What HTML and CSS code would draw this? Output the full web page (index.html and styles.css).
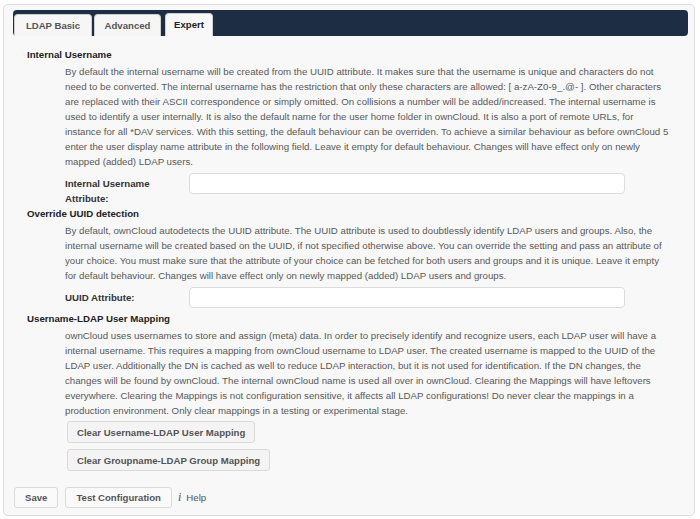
FILE: index.html
```html
<!DOCTYPE html>
<html>
<head>
<meta charset="utf-8">
<link rel="stylesheet" href="styles.css">
</head>
<body>
<div class="box">
  <div class="nav">
    <div class="tab tab-basic">LDAP Basic</div>
    <div class="tab tab-adv">Advanced</div>
    <div class="tab tab-active">Expert</div>
  </div>
  <div class="content">
    <h3 class="title first">Internal Username</h3>
    <p class="desc">By default the internal username will be created from the UUID attribute. It makes sure that the username is unique and characters do not need to be converted. The internal username has the restriction that only these characters are allowed: [ a-zA-Z0-9_.@- ]. Other characters are replaced with their ASCII correspondence or simply omitted. On collisions a number will be added/increased. The internal username is used to identify a user internally. It is also the default name for the user home folder in ownCloud. It is also a port of remote URLs, for instance for all *DAV services. With this setting, the default behaviour can be overriden. To achieve a similar behaviour as before ownCloud 5 enter the user display name attribute in the following field. Leave it empty for default behaviour. Changes will have effect only on newly mapped (added) LDAP users.</p>
    <div class="row row1">
      <label class="lbl">Internal Username Attribute:</label>
      <input class="field" type="text">
    </div>
    <h3 class="title">Override UUID detection</h3>
    <p class="desc">By default, ownCloud autodetects the UUID attribute. The UUID attribute is used to doubtlessly identify LDAP users and groups. Also, the internal username will be created based on the UUID, if not specified otherwise above. You can override the setting and pass an attribute of your choice. You must make sure that the attribute of your choice can be fetched for both users and groups and it is unique. Leave it empty for default behaviour. Changes will have effect only on newly mapped (added) LDAP users and groups.</p>
    <div class="row row2">
      <label class="lbl">UUID Attribute:</label>
      <input class="field" type="text">
    </div>
    <h3 class="title t3">Username-LDAP User Mapping</h3>
    <p class="desc">ownCloud uses usernames to store and assign (meta) data. In order to precisely identify and recognize users, each LDAP user will have a internal username. This requires a mapping from ownCloud username to LDAP user. The created username is mapped to the UUID of the LDAP user. Additionally the DN is cached as well to reduce LDAP interaction, but it is not used for identification. If the DN changes, the changes will be found by ownCloud. The internal ownCloud name is used all over in ownCloud. Clearing the Mappings will have leftovers everywhere. Clearing the Mappings is not configuration sensitive, it affects all LDAP configurations! Do never clear the mappings in a production environment. Only clear mappings in a testing or experimental stage.</p>
    <div class="clear-buttons">
      <button class="btn">Clear Username-LDAP User Mapping</button>
      <button class="btn">Clear Groupname-LDAP Group Mapping</button>
    </div>
  </div>
  <div class="footer">
    <button class="btn">Save</button>
    <button class="btn">Test Configuration</button>
    <span class="help"><span class="help-i">i</span>Help</span>
  </div>
</div>
</body>
</html>
```
FILE: styles.css
```css
html, body {
  margin: 0;
  padding: 0;
  background: #fff;
}
body {
  font-family: "Liberation Sans", Arial, sans-serif;
  font-size: 9.7px;
  color: #585858;
}
.box {
  box-sizing: border-box;
  margin: 4px 5px 0 3px;
  height: 512px;
  border: 1px solid #dedede;
  border-radius: 5px;
  background: #f8f8f8;
  padding: 5px 6px 0 9px;
  display: flex;
  flex-direction: column;
}
.nav {
  height: 26px;
  background: #1d2d44;
  border-radius: 4px;
  display: flex;
  align-items: flex-end;
  padding-left: 1px;
  gap: 2px;
}
.tab {
  box-sizing: border-box;
  height: 22px;
  line-height: 22px;
  background: #f6f6f6;
  border: 1px solid #cfcfcf;
  border-bottom: 0;
  border-radius: 4px 4px 0 0;
  font-weight: bold;
  font-size: 9.6px;
  color: #555;
  text-align: center;
}
.tab-basic {
  width: 78px;
}
.tab-adv {
  width: 67px;
}
.tab-active {
  width: 48px;
  margin-left: 2px;
  height: 23px;
  background: #f8f8f8;
  color: #222;
}
.content {
  padding-left: 14px;
}
.title {
  margin: 0;
  font-size: 9.7px;
  line-height: 15px;
  font-weight: bold;
  color: #222;
}
.title.first {
  margin-top: 11px;
}
.title.t3 {
  margin-top: 3px;
}
.desc {
  margin: 2px 0 0 38px;
  width: 605px;
  line-height: 15px;
}
.row {
  display: flex;
  align-items: flex-start;
  margin-left: 38px;
  margin-top: 4px;
}
.lbl {
  width: 124px;
  padding-top: 3px;
  line-height: 15px;
  font-weight: bold;
  color: #333;
}
.field {
  box-sizing: border-box;
  width: 436px;
  height: 21px;
  margin: 0;
  border: 1px solid #dcdcdc;
  border-radius: 4px;
  background: #fff;
}
.clear-buttons {
  margin: 3px 0 0 40px;
  display: flex;
  flex-direction: column;
  align-items: flex-start;
  gap: 6px;
}
.btn {
  box-sizing: border-box;
  height: 22px;
  padding: 0 9px;
  border: 1px solid #dadada;
  border-radius: 3px;
  background: #f4f4f4;
  font-family: "Liberation Sans", Arial, sans-serif;
  font-size: 9.6px;
  font-weight: bold;
  color: #555;
}
.footer {
  margin-top: 16px;
  display: flex;
  align-items: center;
  gap: 7px;
  padding-left: 1px;
}
.footer .btn {
  height: 21px;
  padding: 0 10px;
  background: #fafafa;
}
.help {
  color: #555;
  margin-left: -1px;
}
.help-i {
  font-family: "Liberation Serif", serif;
  font-style: italic;
  font-size: 12px;
  margin-right: 5px;
}
```
